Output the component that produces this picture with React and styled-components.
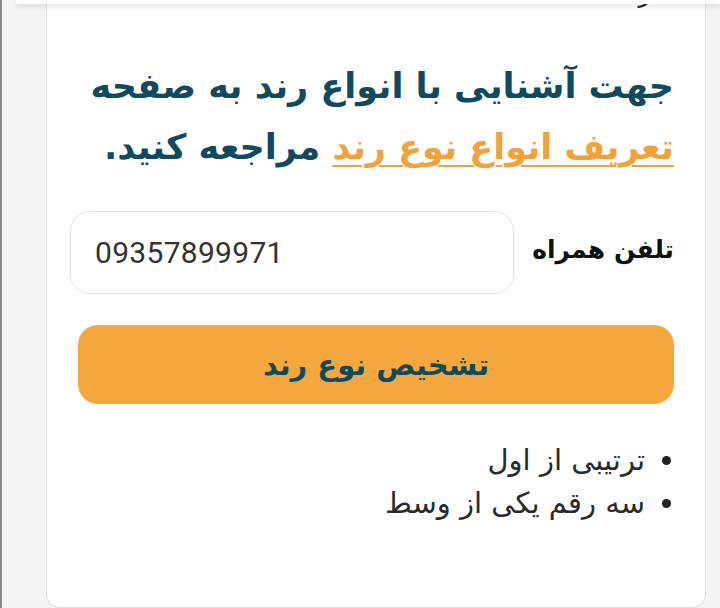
import React from "react";
import styled, { createGlobalStyle } from "styled-components";

const Global = createGlobalStyle`
  html, body { margin: 0; padding: 0; }
  body {
    background: #f4f4f4;
    width: 720px;
    height: 608px;
    overflow: hidden;
    font-family: "DejaVu Sans", "Noto Sans", sans-serif;
  }
`;

const Page = styled.div`
  position: relative;
  height: 608px;
  border-left: 2px solid #8a8a8a;
  box-sizing: border-box;
  padding-left: 44px;
  padding-right: 14px;
`;

const TopShade = styled.div`
  position: absolute;
  top: 0;
  left: 14px;
  right: 0;
  height: 4px;
  background: #fff;
  box-shadow: 0 2px 6px rgba(0, 0, 0, 0.14);
  z-index: 2;
`;

const Card = styled.div`
  direction: rtl;
  background: #fff;
  border: 1px solid #dcdcdc;
  border-top: none;
  border-radius: 0 0 14px 14px;
  height: 608px;
  box-sizing: border-box;
  padding: 0 31px 0 23px;
  display: flex;
  flex-direction: column;
  overflow: hidden;
`;

const CutLine = styled.div`
  height: 14px;
  margin-top: -18px;
  padding-right: 24px;
  font-size: 24px;
  line-height: 24px;
  color: #222;
`;

const Heading = styled.h2`
  margin: 60px 0 0;
  font-weight: 700;
  font-size: 35px;
  line-height: 61px;
  color: #0f4a5e;
  text-align: right;
`;

const Link = styled.a`
  color: #f2a23a;
  text-decoration: underline;
  text-decoration-thickness: 2px;
  text-underline-offset: 6px;
`;

const FieldRow = styled.div`
  display: flex;
  align-items: center;
  gap: 18px;
  margin-top: 33px;
`;

const Label = styled.label`
  font-weight: 700;
  font-size: 25px;
  color: #111;
  white-space: nowrap;
  margin-top: -6px;
`;

const Input = styled.div`
  direction: ltr;
  flex: 1;
  height: 83px;
  box-sizing: border-box;
  border: 1.5px solid #e2e2e2;
  border-radius: 20px;
  display: flex;
  align-items: center;
  padding-left: 24px;
  font-family: Roboto, "Noto Sans", sans-serif;
  font-size: 30px;
  color: #333;
  letter-spacing: 0.3px;
`;

const Button = styled.button`
  margin: 31px 0 0 8px;
  height: 79px;
  border: none;
  border-radius: 20px;
  background: #f4a73f;
  color: #0f4a5e;
  font-family: "DejaVu Sans", sans-serif;
  font-weight: 700;
  font-size: 29px;
  cursor: pointer;
`;

const List = styled.ul`
  margin: 35px 0 0;
  padding: 0 3px 0 0;
  list-style: none;
  font-size: 29px;
  line-height: 43px;
  color: #2a2a2a;
`;

const Item = styled.li`
  display: flex;
  align-items: center;
  gap: 17px;
  &::before {
    content: "";
    width: 9px;
    height: 9px;
    border-radius: 50%;
    background: #222;
    flex: none;
  }
`;

export default function App() {
  return (
    <>
      <Global />
      <Page>
        <TopShade />
        <Card>
          <CutLine>ر</CutLine>
          <Heading>
            جهت آشنایی با انواع رند به صفحه{" "}
            <Link href="#">تعریف انواع نوع رند</Link> مراجعه کنید.
          </Heading>
          <FieldRow>
            <Label>تلفن همراه</Label>
            <Input>09357899971</Input>
          </FieldRow>
          <Button>تشخیص نوع رند</Button>
          <List>
            <Item>ترتیبی از اول</Item>
            <Item>سه رقم یکی از وسط</Item>
          </List>
        </Card>
      </Page>
    </>
  );
}
